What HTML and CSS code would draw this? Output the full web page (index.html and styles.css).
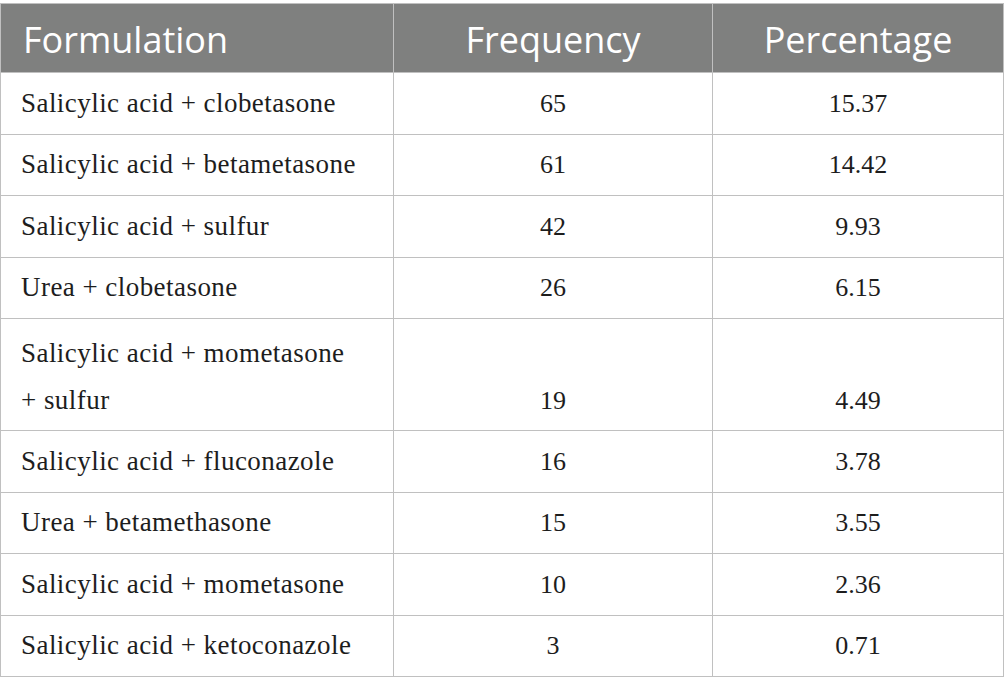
FILE: index.html
```html
<!DOCTYPE html>
<html lang="en">
<head>
  <meta charset="UTF-8">
  <title>Formulations</title>
  <link rel="stylesheet" href="styles.css">
</head>
<body>
  <table class="data-table">
    <colgroup>
      <col class="col-name">
      <col class="col-freq">
      <col class="col-pct">
    </colgroup>
    <thead>
      <tr>
        <th class="left">Formulation</th>
        <th>Frequency</th>
        <th>Percentage</th>
      </tr>
    </thead>
    <tbody>
      <tr><td>Salicylic acid + clobetasone</td><td>65</td><td>15.37</td></tr>
      <tr><td>Salicylic acid + betametasone</td><td>61</td><td>14.42</td></tr>
      <tr><td>Salicylic acid + sulfur</td><td>42</td><td>9.93</td></tr>
      <tr><td>Urea + clobetasone</td><td>26</td><td>6.15</td></tr>
      <tr class="tall"><td>Salicylic acid + mometasone<br>+ sulfur</td><td>19</td><td>4.49</td></tr>
      <tr><td>Salicylic acid + fluconazole</td><td>16</td><td>3.78</td></tr>
      <tr><td>Urea + betamethasone</td><td>15</td><td>3.55</td></tr>
      <tr><td>Salicylic acid + mometasone</td><td>10</td><td>2.36</td></tr>
      <tr><td>Salicylic acid + ketoconazole</td><td>3</td><td>0.71</td></tr>
    </tbody>
  </table>
</body>
</html>
```
FILE: styles.css
```css
body {
  margin: 0;
  padding-top: 3px;
  background: #fff;
}

/* Table frame */
.data-table {
  border-collapse: collapse;
  width: 1003px;
  table-layout: fixed;
}
.col-name { width: 393px; }
.col-freq { width: 319px; }
.col-pct  { width: 291px; }

.data-table th,
.data-table td {
  border: 1px solid #c0c0c0;
  text-align: center;
}

/* Header row */
.data-table th {
  background-color: #7f807f;
  color: #fff;
  font-family: 'Open Sans', 'Noto Sans', sans-serif;
  font-weight: 400;
  font-size: 36px;
  height: 65px;
  padding: 3px 20px 0;
  line-height: 1;
}
.data-table th.left { text-align: left; padding-left: 22px; }

/* Body rows */
.data-table td {
  font-family: 'Liberation Serif', 'Times New Roman', serif;
  font-size: 26px;
  color: #1d1d1d;
  height: 60.5px;
  padding: 0 20px;
  line-height: 47px;
}
.data-table td:first-child {
  text-align: left;
  font-size: 27px;
  letter-spacing: 0.45px;
}

.data-table tr.tall td {
  height: 105px;
  vertical-align: bottom;
  padding-bottom: 6px;
}
```
